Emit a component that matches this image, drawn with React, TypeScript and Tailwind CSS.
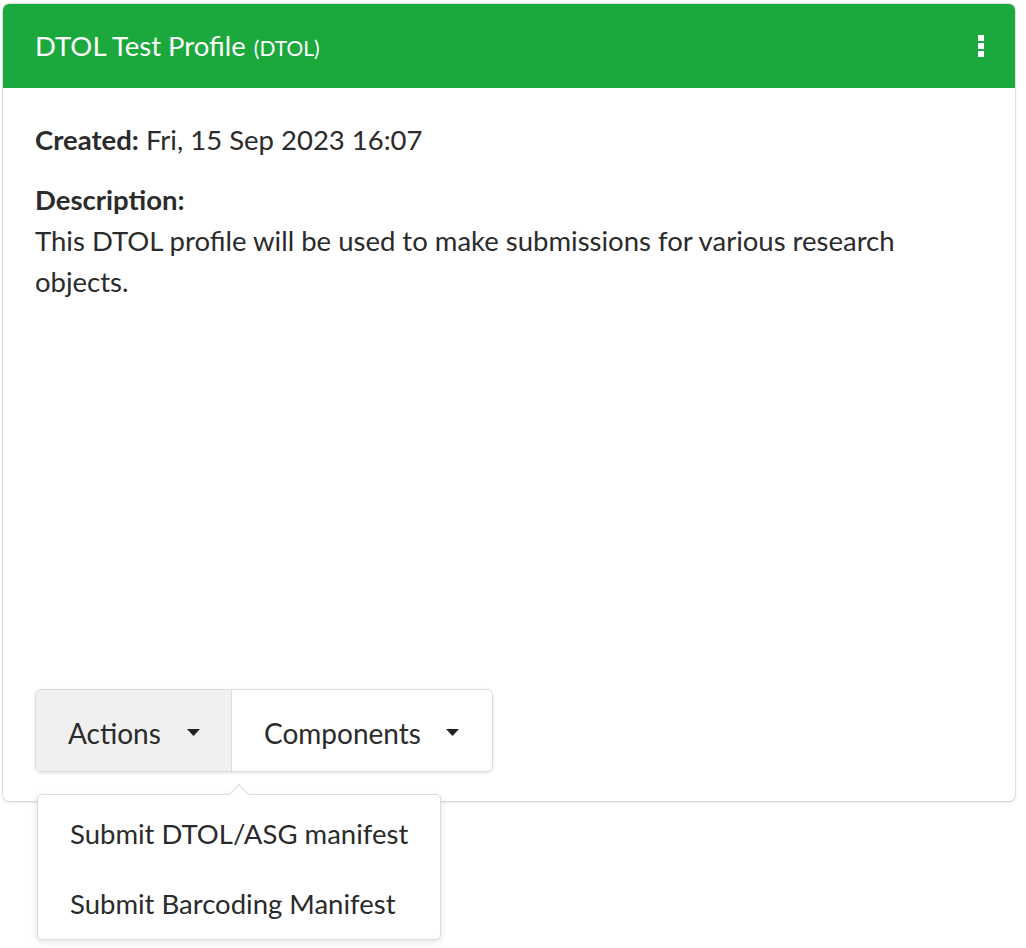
export default function App() {
  return (
    <div className="min-h-screen bg-white font-['Lato',sans-serif] text-[#2b2b2b]">
      <div className="pl-[3px] pt-[4px]">
        <div className="relative flex h-[797px] w-[1012px] flex-col rounded-[6px] bg-white shadow-[0_1px_3px_0_#d4d4d5,0_0_0_1px_#e4e4e6]">
          {/* header */}
          <div className="flex h-[84px] items-center justify-between rounded-t-[6px] bg-[#1ba83c] pl-[32px] pr-[31px] text-white">
            <div className="flex items-baseline gap-[8px]">
              <span className="text-[27.5px]">DTOL Test Profile</span>
              <span className="text-[21px]">(DTOL)</span>
            </div>
            <div className="flex flex-col gap-[2px]">
              <span className="h-[6px] w-[6px] bg-white" />
              <span className="h-[6px] w-[6px] bg-white" />
              <span className="h-[6px] w-[6px] bg-white" />
            </div>
          </div>

          {/* body */}
          <div className="flex flex-1 flex-col justify-between px-[32px] pt-[31px] pb-[29px]">
            <div className="text-[27.5px] leading-[41px]">
              <p className="mb-[19px]">
                <span className="font-bold">Created:</span> Fri, 15 Sep 2023 16:07
              </p>
              <p className="font-bold">Description:</p>
              <p>This DTOL profile will be used to make submissions for various research objects.</p>
            </div>

            <div className="relative flex h-[83px] w-[458px] rounded-[6px] border border-[#dcdcdc] shadow-[0_1px_3px_0_rgba(0,0,0,0.12)]">
              <div className="flex w-[196px] items-center justify-between rounded-l-[5px] border-r border-[#dcdcdc] bg-[#f0f0f0] pl-[32px] pr-[31px] pt-[4px] text-[28px]">
                <span>Actions</span>
                <Caret />
              </div>
              <div className="flex flex-1 items-center justify-between pl-[32px] pr-[33px] pt-[4px] text-[28px]">
                <span>Components</span>
                <Caret />
              </div>

              {/* dropdown */}
              <div className="absolute left-[1px] top-[104px] z-10 w-[404px] rounded-[5px] border border-[#dcdcdc] bg-white pt-[4px] shadow-[0_2px_6px_0_rgba(0,0,0,0.12)]">
                <div className="absolute -top-[8px] left-[194px] h-[14px] w-[14px] rotate-45 border-l border-t border-[#dcdcdc] bg-white" />
                <div className="relative flex h-[70px] items-center whitespace-nowrap px-[32px] text-[27.5px]">Submit DTOL/ASG manifest</div>
                <div className="relative flex h-[70px] items-center whitespace-nowrap px-[32px] text-[27.5px]">Submit Barcoding Manifest</div>
              </div>
            </div>
          </div>
        </div>
      </div>
    </div>
  )
}

function Caret() {
  return (
    <svg width="13" height="8" viewBox="0 0 13 8">
      <path d="M0 0 L13 0 L6.5 7 Z" fill="#222" />
    </svg>
  )
}
